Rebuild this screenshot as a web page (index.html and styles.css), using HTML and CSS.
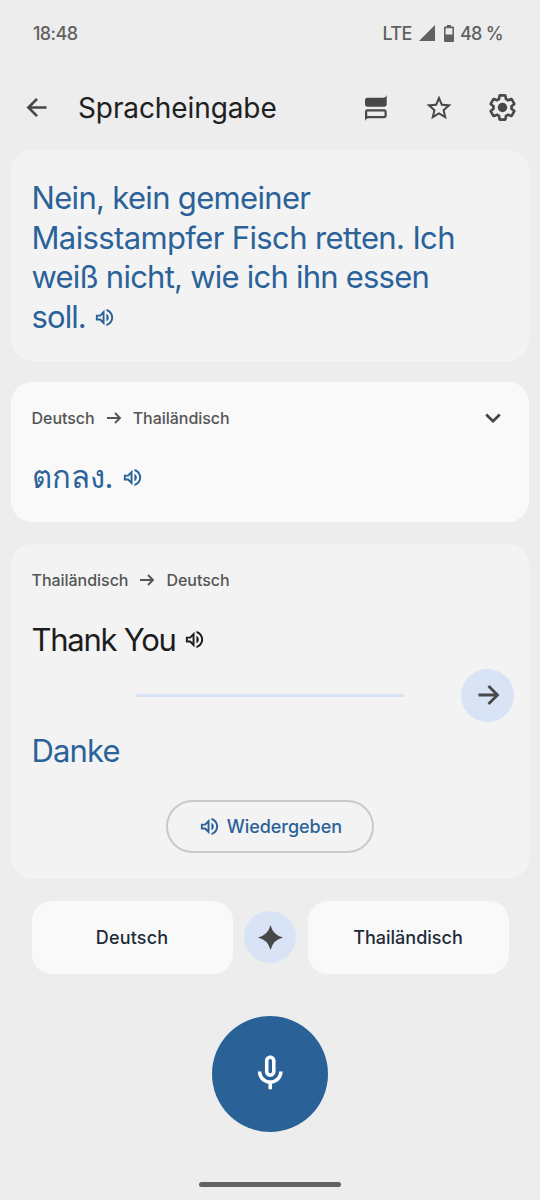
FILE: index.html
```html
<!DOCTYPE html>
<html lang="de">
<head>
<meta charset="utf-8">
<title>Spracheingabe</title>
<link rel="stylesheet" href="styles.css">
</head>
<body>
<svg class="defs" width="0" height="0" aria-hidden="true">
  <symbol id="volume" viewBox="0 0 24 24"><path d="M3 9v6h4l5 5V4L7 9H3zm7-.17v6.34L7.83 13H5v-2h2.83L10 8.83zM16.5 12c0-1.77-1.02-3.29-2.5-4.03v8.05c1.48-.73 2.5-2.25 2.5-4.02zM14 3.23v2.06c2.89.86 5 3.54 5 6.71s-2.11 5.85-5 6.71v2.06c4.01-.91 7-4.49 7-8.77s-2.99-7.86-7-8.77z"/></symbol>
  <symbol id="arrow" viewBox="0 0 24 24"><path d="M2.5 12h18M12.5 3l9 9-9 9" fill="none" stroke="currentColor" stroke-width="2.8"/></symbol>
  <symbol id="arrow-small" viewBox="0 0 16 14"><path d="M1 7h13M9 2l5 5-5 5" fill="none" stroke="currentColor" stroke-width="1.9"/></symbol>
</svg>
<div class="screen">
  <header class="status">
    <span class="clock">18:48</span>
    <span class="network">LTE</span>
    <svg class="signal" viewBox="0 0 16 16"><path d="M16 0v16H0z"/></svg>
    <svg class="battery" viewBox="0 0 10 17"><path fill-rule="evenodd" d="M3 0h4v1.5h2a1 1 0 0 1 1 1V16a1 1 0 0 1-1 1H1a1 1 0 0 1-1-1V2.500a1 1 0 0 1 1-1h2zM1.600 3.200v6.300h6.800V3.200z"/></svg>
    <span class="percent">48 %</span>
  </header>
  <nav class="appbar">
    <svg class="back" viewBox="0 0 24 24"><use href="#arrow"/></svg>
    <h1 class="title">Spracheingabe</h1>
    <svg class="split" viewBox="0 0 22 26"><path d="M2.500 2.700H18.500Q21 2.700 21.700 0V9Q21.700 11.700 19 11.700H2.500Q0 11.700 0 9V5.200Q0 2.700 2.500 2.700z"/><path fill-rule="evenodd" d="M2.500 14.300H19Q21.700 14.300 21.700 17V20.500Q21.700 23.200 19 23.200H3Q.9 23.200 0 26V17Q0 14.300 2.500 14.300zM2.200 16.500v4.500h17.300v-4.500z"/></svg>
    <svg class="star" viewBox="0 0 24 24"><path d="M22 9.240l-7.190-.62L12 2 9.190 8.630 2 9.240l5.460 4.730L5.820 21 12 17.270 18.180 21l-1.630-7.030L22 9.240zM12 15.400l-3.760 2.270 1-4.280-3.320-2.880 4.380-.38L12 6.100l1.710 4.040 4.380.38-3.320 2.880 1 4.280L12 15.400z"/></svg>
    <svg class="gear" viewBox="0 0 24 24"><path fill="none" stroke="currentColor" stroke-width="2.2" d="M19.430 12.980c.04-.32.07-.64.07-.98 0-.34-.03-.66-.07-.98l2.110-1.650c.19-.15.24-.42.12-.64l-2-3.460c-.09-.16-.26-.25-.44-.25-.06 0-.12.01-.17.03l-2.490 1c-.52-.4-1.080-.73-1.690-.98l-.38-2.650C14.460 2.180 14.250 2 14 2h-4c-.25 0-.46.18-.49.42l-.38 2.650c-.61.25-1.170.59-1.690.98l-2.490-1c-.06-.02-.12-.03-.18-.03-.17 0-.34.09-.43.25l-2 3.460c-.13.22-.07.49.12.64l2.110 1.650c-.04.32-.07.65-.07.98 0 .33.03.66.07.98l-2.110 1.650c-.19.15-.24.42-.12.64l2 3.460c.09.16.26.25.44.25.06 0 .12-.01.17-.03l2.490-1c.52.4 1.080.73 1.690.98l.38 2.650c.03.24.24.42.49.42h4c.25 0 .46-.18.49-.42l.38-2.650c.61-.25 1.170-.59 1.690-.98l2.490 1c.06.02.12.03.18.03.17 0 .34-.09.43-.25l2-3.460c.12-.22.07-.49-.12-.64l-2.110-1.650z"/><circle cx="12" cy="12" r="3.900"/></svg>
  </nav>
  <main class="cards">
    <section class="card card-first">
      <p class="phrase"><span class="l1">Nein, kein gemeiner</span><br><span class="l2">Maisstampfer Fisch retten. Ich</span><br><span class="l3">weiß nicht, wie ich ihn essen</span><br><span class="l4">soll.</span><svg class="volume"><use href="#volume"/></svg></p>
    </section>
    <section class="card card-thai">
      <div class="langs"><span class="de">Deutsch</span><svg class="to"><use href="#arrow-small"/></svg><span class="th">Thailändisch</span>
        <svg class="chevron" viewBox="0 0 16 10"><path d="M1.200 1.500 8 8.200l6.800-6.700" fill="none" stroke="currentColor" stroke-width="2.700"/></svg></div>
      <p class="phrase"><span class="thai" lang="th">ตกลง.</span><svg class="volume"><use href="#volume"/></svg></p>
    </section>
    <section class="card card-reply">
      <div class="langs"><span class="th">Thailändisch</span><svg class="to"><use href="#arrow-small"/></svg><span class="de">Deutsch</span></div>
      <p class="phrase source"><span class="ty">Thank You</span><svg class="volume"><use href="#volume"/></svg></p>
      <div class="divider"><i class="rule"></i><span class="go"><svg viewBox="0 0 24 24"><use href="#arrow"/></svg></span></div>
      <p class="phrase result"><span class="danke">Danke</span></p>
      <button class="play"><svg class="volume"><use href="#volume"/></svg><span>Wiedergeben</span></button>
    </section>
  </main>
  <div class="picker">
    <button class="lang"><span class="pde">Deutsch</span></button>
    <span class="spark"><svg viewBox="0 0 24 24"><path d="M12 0Q14.300 9.700 24 12Q14.300 14.300 12 24Q9.700 14.300 0 12Q9.700 9.700 12 0z"/></svg></span>
    <button class="lang"><span class="pth">Thailändisch</span></button>
  </div>
  <button class="mic"><svg viewBox="0 0 24 24"><path d="M12 14c1.660 0 3-1.340 3-3V5c0-1.660-1.340-3-3-3S9 3.340 9 5v6c0 1.660 1.340 3 3 3zm-1-9c0-.55.45-1 1-1s1 .45 1 1v6c0 .55-.45 1-1 1s-1-.45-1-1V5zm6 6c0 2.760-2.240 5-5 5s-5-2.240-5-5H5c0 3.530 2.610 6.430 6 6.920V21h2v-3.080c3.390-.49 6-3.390 6-6.920h-2z"/></svg></button>
  <div class="home"></div>
</div>
</body>
</html>
```
FILE: styles.css
```css
* { box-sizing: border-box; }
body { margin: 0; background: #ededed; font-family: Inter, "Noto Sans", sans-serif; }
.defs { display: block; }
.screen { width: 540px; height: 1200px; display: flex; flex-direction: column; overflow: hidden; }
svg { fill: currentColor; flex: none; display: block; }
button { border: 0; padding: 0; font: inherit; color: inherit; background: none; }
p, h1 { margin: 0; font-weight: 400; }
span { white-space: nowrap; }

.status { height: 66px; display: flex; align-items: center; padding: 0 37px 0 33px; color: #616161; font-size: 18px; font-weight: 500; }
.clock { letter-spacing: -.6px; margin-right: auto; }
.network { width: 36.500px; letter-spacing: -.6px; }
.signal { width: 16px; height: 16px; margin-right: 9px; }
.battery { width: 10px; height: 17px; margin-right: 6px; }
.percent { letter-spacing: -.7px; }

.appbar { height: 84px; display: flex; align-items: center; padding: 0 23px 1px 26px; color: #484848; }
.back { width: 23px; height: 23px; transform: scaleX(-1); }
.title { width: 286px; margin-left: 29px; font-size: 28px; line-height: 34px; padding-top: 1px; color: #202020; letter-spacing: -.1px; }
.split { width: 22px; height: 26px; margin-left: 1px; }
.star { width: 30px; height: 30px; margin-left: 37px; }
.gear { width: 29px; height: 29px; margin-left: 34px; overflow: visible; }

.cards { display: flex; flex-direction: column; padding: 0 11px; }
.card { border-radius: 21px; background: #f3f3f3; padding: 0 21px 0 20.500px; }
.card-first { height: 211px; padding-top: 28px; }
.card-thai { height: 140px; margin: 21px 0 22px; background: #f9f9f9; }
.card-reply { height: 335px; }
.phrase { font-size: 31px; line-height: 39.5px; color: #2a6299; }
.l1 { letter-spacing: -.68px; }
.l2 { letter-spacing: -.63px; }
.l3 { letter-spacing: -.77px; }
.l4 { letter-spacing: -.9px; }
.ty { letter-spacing: -1.250px; }
.danke { letter-spacing: -.85px; }
.volume { display: inline-block; width: 23px; height: 23px; }
.phrase .volume { margin-left: 7.500px; vertical-align: -1px; }
.langs { height: 72px; display: flex; align-items: center; color: #555; font-size: 16px; font-weight: 500; letter-spacing: -.03px; }
.to { width: 16px; height: 14px; margin: 0 11px; }
.chevron { width: 16px; height: 10px; margin-left: auto; margin-right: 7.500px; color: #444; }
.card-thai .phrase { margin-top: 3px; }
.source { color: #1c1c1c; margin-top: 4px; }
.source .volume { vertical-align: 0; }
.divider { display: flex; align-items: center; height: 53px; margin: 9px -6px 0 104.500px; }
.rule { width: 268px; height: 3px; background: #d8e3f6; margin-right: auto; }
.go, .spark { display: flex; align-items: center; justify-content: center; width: 53px; height: 53px; border-radius: 50%; background: #d8e3f6; color: #484848; }
.go svg { width: 24px; height: 24px; }
.result { margin-top: 9px; }
.play { display: flex; align-items: center; width: 208px; height: 53px; margin: 30px auto 0; padding-left: 30px; gap: 6px; border: 2px solid #c9c9c9; border-radius: 27px; color: #2a6299; font-size: 18px; font-weight: 500; letter-spacing: -.05px; }

.picker { display: flex; align-items: center; justify-content: space-between; height: 73px; margin: 21.5px 31.500px 0; }
.lang { width: 201px; height: 73px; border-radius: 20px; background: #f9f9f9; color: #1d2a38; font-size: 18px; font-weight: 500; }
.pde { letter-spacing: .15px; }
.spark { width: 52px; height: 52px; }
.spark svg { width: 25px; height: 25px; }
.mic { width: 116px; height: 116px; margin: 42px auto 0; border-radius: 50%; background: #2a6297; color: #fff; display: flex; align-items: center; justify-content: center; }
.mic svg { width: 42.500px; height: 42.500px; }
.home { width: 142px; height: 5px; margin: 50px auto 0; border-radius: 3px; background: #636363; }
```
